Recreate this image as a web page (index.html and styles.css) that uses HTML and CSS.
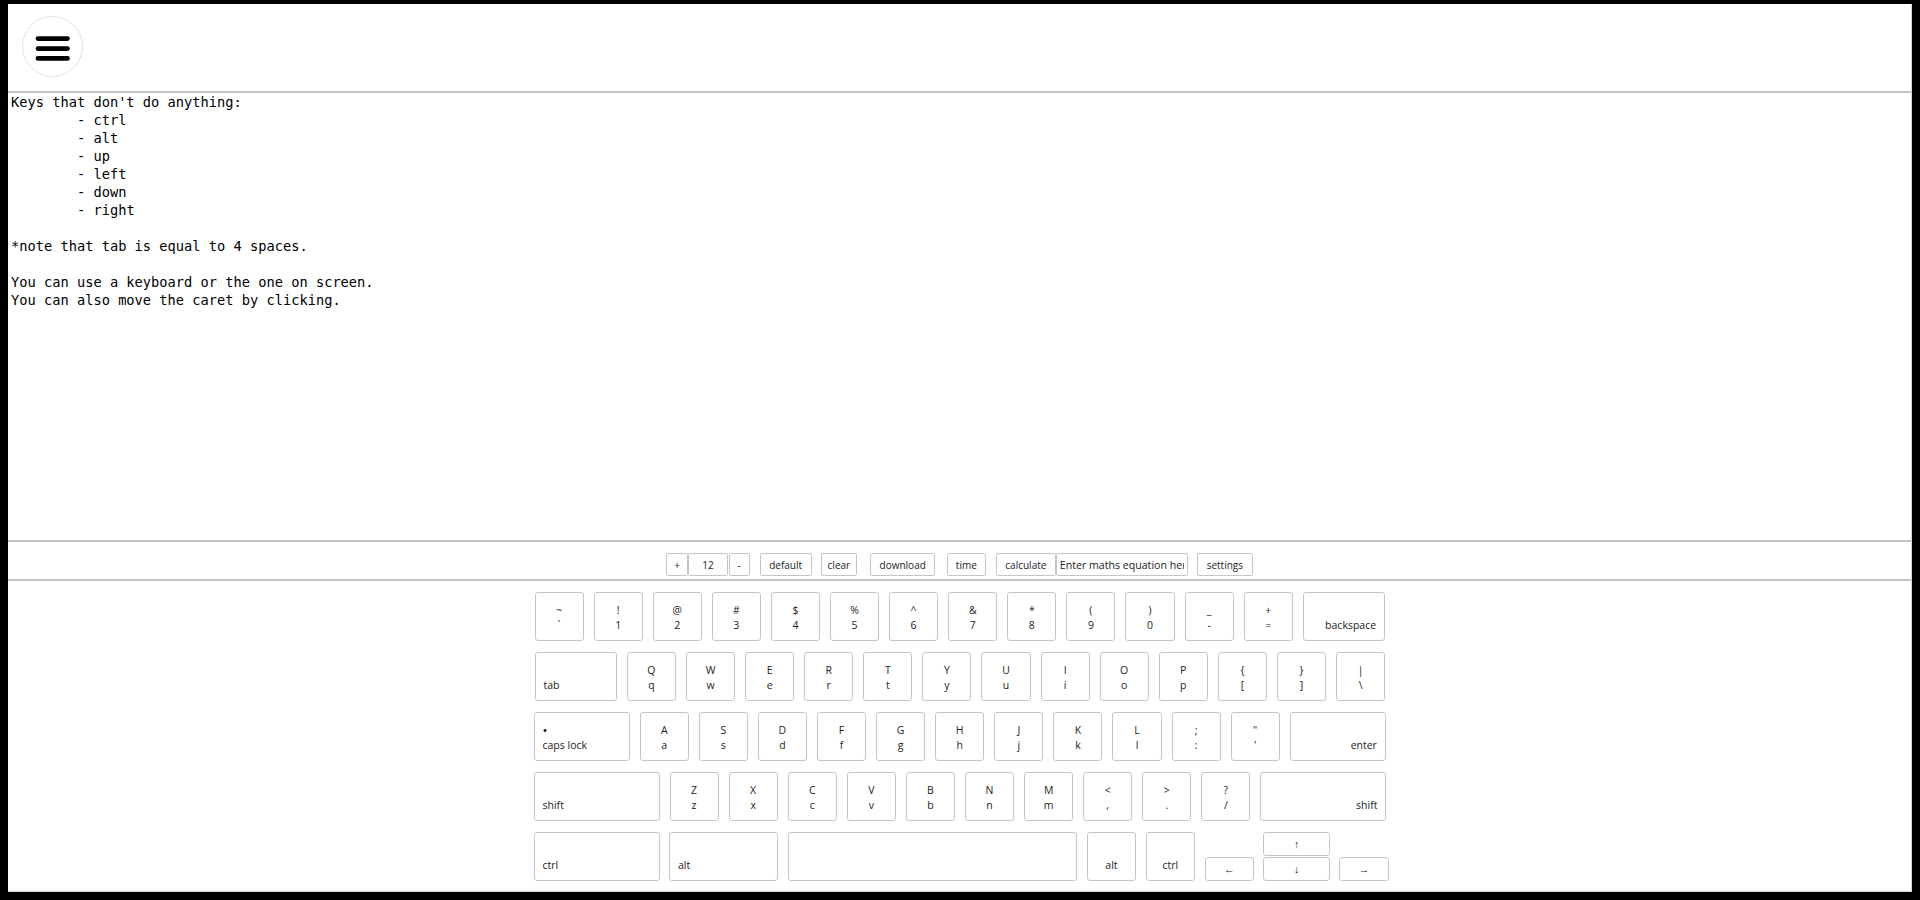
FILE: index.html
```html
<!DOCTYPE html>
<html lang="en">
<head>
<meta charset="utf-8">
<title>Text editor</title>
<link rel="stylesheet" href="styles.css">
</head>
<body>
<header class="topbar">
  <button class="menu-btn" aria-label="menu">
    <svg class="menu-icon" width="61" height="61" viewBox="0 0 61 61">
      <line x1="16" y1="22.6" x2="45.5" y2="22.6"/>
      <line x1="16" y1="32.6" x2="45.5" y2="32.6"/>
      <line x1="16" y1="42.4" x2="45.5" y2="42.4"/>
    </svg>
  </button>
</header>
<textarea class="editor" spellcheck="false">Keys that don't do anything:
	- ctrl
	- alt
	- up
	- left
	- down
	- right

*note that tab is equal to 4 spaces.

You can use a keyboard or the one on screen.
You can also move the caret by clicking.</textarea>
<div class="toolbar">
  <button class="tbtn w22">+</button>
  <input class="tinput size-input" value="12">
  <button class="tbtn w21 ml1">-</button>
  <button class="tbtn w52 ml10">default</button>
  <button class="tbtn w36 ml9">clear</button>
  <button class="tbtn w65 ml13">download</button>
  <button class="tbtn w39 ml11">time</button>
  <button class="tbtn w60 ml10">calculate</button>
  <input class="tinput eq-input" placeholder="Enter maths equation here">
  <button class="tbtn w56 ml9">settings</button>
</div>
<div class="keyboard">
  <div class="kb">
    <div class="row row-shift">
      <div class="key"><span>~</span><span>`</span></div>
      <div class="key"><span>!</span><span>1</span></div>
      <div class="key"><span>@</span><span>2</span></div>
      <div class="key"><span>#</span><span>3</span></div>
      <div class="key"><span>$</span><span>4</span></div>
      <div class="key"><span>%</span><span>5</span></div>
      <div class="key"><span>^</span><span>6</span></div>
      <div class="key"><span>&amp;</span><span>7</span></div>
      <div class="key"><span>*</span><span>8</span></div>
      <div class="key"><span>(</span><span>9</span></div>
      <div class="key"><span>)</span><span>0</span></div>
      <div class="key"><span>_</span><span>-</span></div>
      <div class="key"><span>+</span><span>=</span></div>
      <div class="key k82 right"><span>&nbsp;</span><span>backspace</span></div>
    </div>
    <div class="row row-shift">
      <div class="key k82 left"><span>&nbsp;</span><span>tab</span></div>
      <div class="key"><span>Q</span><span>q</span></div>
      <div class="key"><span>W</span><span>w</span></div>
      <div class="key"><span>E</span><span>e</span></div>
      <div class="key"><span>R</span><span>r</span></div>
      <div class="key"><span>T</span><span>t</span></div>
      <div class="key"><span>Y</span><span>y</span></div>
      <div class="key"><span>U</span><span>u</span></div>
      <div class="key"><span>I</span><span>i</span></div>
      <div class="key"><span>O</span><span>o</span></div>
      <div class="key"><span>P</span><span>p</span></div>
      <div class="key"><span>{</span><span>[</span></div>
      <div class="key"><span>}</span><span>]</span></div>
      <div class="key"><span>|</span><span>\</span></div>
    </div>
    <div class="row">
      <div class="key k96 left"><span class="dot">•</span><span>caps lock</span></div>
      <div class="key"><span>A</span><span>a</span></div>
      <div class="key"><span>S</span><span>s</span></div>
      <div class="key"><span>D</span><span>d</span></div>
      <div class="key"><span>F</span><span>f</span></div>
      <div class="key"><span>G</span><span>g</span></div>
      <div class="key"><span>H</span><span>h</span></div>
      <div class="key"><span>J</span><span>j</span></div>
      <div class="key"><span>K</span><span>k</span></div>
      <div class="key"><span>L</span><span>l</span></div>
      <div class="key"><span>;</span><span>:</span></div>
      <div class="key"><span>"</span><span>'</span></div>
      <div class="key k96 right"><span>&nbsp;</span><span>enter</span></div>
    </div>
    <div class="row">
      <div class="key k126 left"><span>&nbsp;</span><span>shift</span></div>
      <div class="key"><span>Z</span><span>z</span></div>
      <div class="key"><span>X</span><span>x</span></div>
      <div class="key"><span>C</span><span>c</span></div>
      <div class="key"><span>V</span><span>v</span></div>
      <div class="key"><span>B</span><span>b</span></div>
      <div class="key"><span>N</span><span>n</span></div>
      <div class="key"><span>M</span><span>m</span></div>
      <div class="key"><span>&lt;</span><span>,</span></div>
      <div class="key"><span>&gt;</span><span>.</span></div>
      <div class="key"><span>?</span><span>/</span></div>
      <div class="key k126 right"><span>&nbsp;</span><span>shift</span></div>
    </div>
    <div class="row row-bottom">
      <div class="key k126 left"><span>&nbsp;</span><span>ctrl</span></div>
      <div class="key k109 left"><span>&nbsp;</span><span>alt</span></div>
      <div class="key k289"><span>&nbsp;</span><span>&nbsp;</span></div>
      <div class="key k49"><span>&nbsp;</span><span>alt</span></div>
      <div class="key k49"><span>&nbsp;</span><span>ctrl</span></div>
      <div class="key k49 half">←</div>
      <div class="arrow-col">
        <div class="key k66 half">↑</div>
        <div class="key k66 half">↓</div>
      </div>
      <div class="key k49 half">→</div>
    </div>
  </div>
</div>
</body>
</html>
```

FILE: styles.css
```css
* { box-sizing: border-box; }

html {
  background: #000;
  overflow: hidden;
}

body {
  margin: 4px 8px 8px;
  background: #fff;
  border-right: 1px solid #d4d4d4;
  border-bottom: 1px solid #d4d4d4;
  font-family: "Open Sans", "Noto Sans", Arial, sans-serif;
  color: #222;
}

.topbar {
  height: 89px;
  padding: 12px 0 0 14px;
  border-bottom: 2px solid #c3c3c3;
}

.menu-btn {
  display: block;
  width: 61px;
  height: 61px;
  padding: 0;
  margin: 0;
  border: 1px solid #e2e2e2;
  border-radius: 50%;
  background: #fff;
  cursor: pointer;
}

.menu-icon {
  display: block;
  margin: -1px;
}

.menu-icon line {
  stroke: #000;
  stroke-width: 4.7;
  stroke-linecap: round;
}

.editor {
  display: block;
  width: 100%;
  height: 447px;
  margin: 0;
  padding: 0 2px 0 3px;
  border: none;
  outline: none;
  resize: none;
  overflow: hidden;
  font-family: "DejaVu Sans Mono", "Liberation Mono", monospace;
  font-size: 13.7px;
  line-height: 18px;
  color: #000;
  tab-size: 8;
  background: #fff;
}

.toolbar {
  height: 41px;
  border-top: 2px solid #c3c3c3;
  border-bottom: 2px solid #c3c3c3;
  padding-top: 11px;
  display: flex;
  justify-content: center;
  align-items: flex-start;
}

.tbtn,
.tinput {
  height: 23px;
  margin: 0;
  padding: 0;
  border: 1px solid #c6c6c6;
  border-radius: 2px;
  background: #fff;
  font-family: "Open Sans", "Noto Sans", Arial, sans-serif;
  font-size: 10px;
  color: #222;
  flex-shrink: 0;
}

.tbtn { text-align: center; }

.tinput { outline: none; }

.size-input {
  width: 39.5px;
  text-align: center;
}

.eq-input {
  width: 132px;
  padding: 0 3px;
  font-size: 10.6px;
}

.eq-input::placeholder { color: #222; opacity: 1; }

.w21 { width: 21px; }
.w22 { width: 22px; }
.w36 { width: 36.4px; }
.w39 { width: 39px; }
.w52 { width: 52px; }
.w56 { width: 56px; }
.w60 { width: 60px; }
.w65 { width: 65.3px; }

.ml1 { margin-left: 1px; }
.ml9 { margin-left: 9px; }
.ml10 { margin-left: 10px; }
.ml11 { margin-left: 11.5px; }
.ml13 { margin-left: 13px; }

.keyboard {
  height: 310px;
  padding: 11px 0 10px;
  display: flex;
  justify-content: center;
}

.kb {
  width: 852px;
  display: flex;
  flex-direction: column;
  gap: 11px;
}

.row {
  display: flex;
  gap: 10px;
  height: 49px;
}

.row-shift { margin-left: 1px; }

.row-bottom {
  gap: 9.5px;
  align-items: flex-end;
}

.key {
  flex-shrink: 0;
  width: 49.1px;
  height: 49px;
  border: 1px solid #c6c6c6;
  border-radius: 3px;
  background: #fff;
  padding-top: 2px;
  display: flex;
  flex-direction: column;
  justify-content: center;
  align-items: center;
  font-size: 10.5px;
  line-height: 15px;
  color: #222;
  white-space: nowrap;
}

.key.left { align-items: flex-start; padding-left: 8px; }
.key.right { align-items: flex-end; padding-right: 8px; }

.dot {
  font-size: 13px;
  line-height: 15px;
  color: #000;
}

.k49 { width: 49.4px; }
.k66 { width: 66.4px; }
.k82 { width: 82.4px; }
.k96 { width: 96.2px; }
.k109 { width: 109.4px; }
.k126 { width: 126px; }
.k289 { width: 289.4px; }

.key.half {
  height: 24px;
  padding-top: 0;
}

.arrow-col {
  display: flex;
  flex-direction: column;
  gap: 1px;
  flex-shrink: 0;
}
```
